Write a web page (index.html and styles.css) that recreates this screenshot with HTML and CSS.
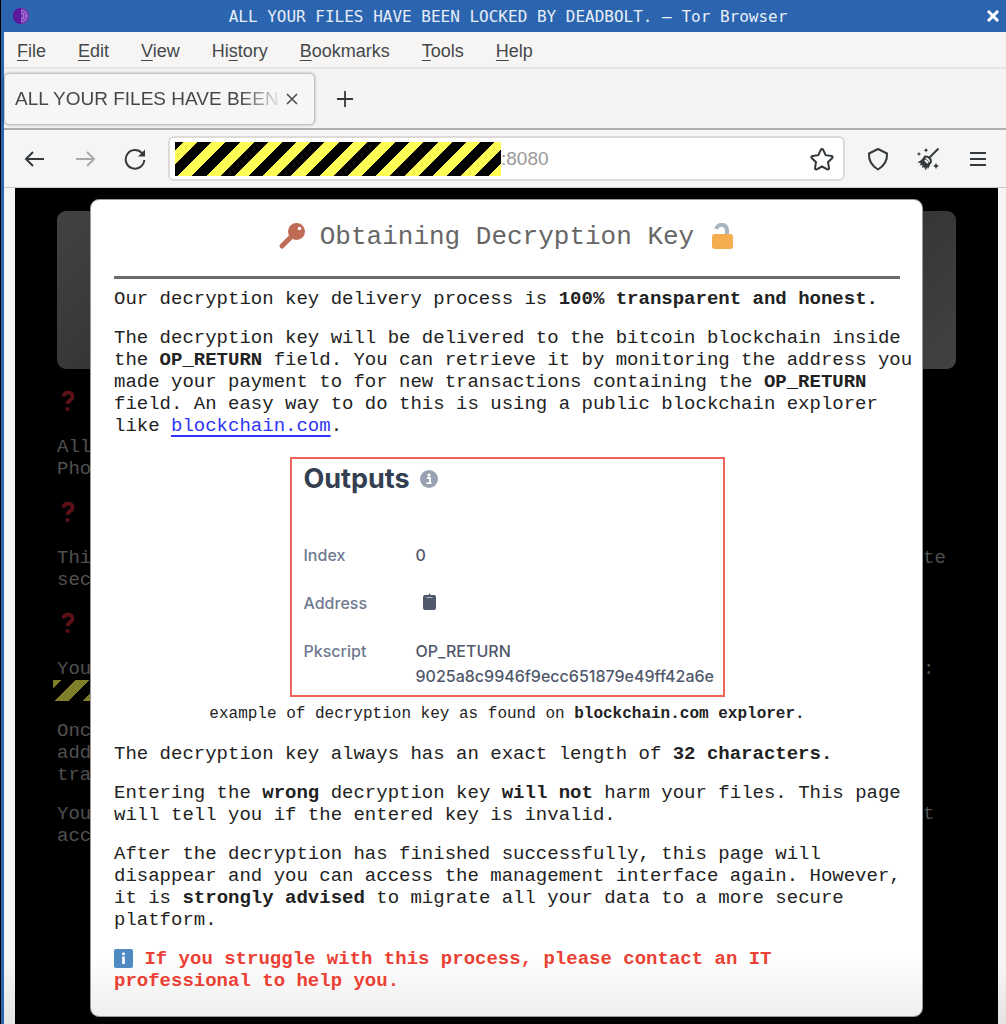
FILE: index.html
```html
<!DOCTYPE html>
<html lang="en">
<head>
    <meta charset="utf-8">
    <meta name="viewport" content="width=device-width, initial-scale=1">
    <title>ALL YOUR FILES HAVE BEEN LOCKED BY DEADBOLT.</title>
    <link rel="stylesheet" href="styles.css">
</head>
<body>
    <div class="window">
        <header class="titlebar">
            <svg class="app-icon" width="16" height="16" viewBox="0 0 16 16">
                <circle cx="8" cy="8" r="8" fill="#5b1fa0"/>
                <path d="M8 0a8 8 0 0 1 0 16z" fill="#7b3fb5"/>
                <path d="M8 2.500a5.500 5.500 0 0 1 0 11M8 5a3 3 0 0 1 0 6" fill="none" stroke="#b58cd8"/>
                <path d="M8 0a8 8 0 0 0 0 16z" fill="#5a189a"/>
            </svg>
            <span class="window-title">ALL YOUR FILES HAVE BEEN LOCKED BY DEADBOLT. — Tor Browser</span>
            <button class="window-close" aria-label="Close window">
                <svg width="12" height="12" viewBox="0 0 12 12"><path d="M2 2l8 8M10 2l-8 8" stroke="#fff" stroke-width="3" stroke-linecap="square"/></svg>
            </button>
        </header>

        <nav class="menubar">
            <button><u>F</u>ile</button>
            <button><u>E</u>dit</button>
            <button><u>V</u>iew</button>
            <button>Hi<u>s</u>tory</button>
            <button><u>B</u>ookmarks</button>
            <button><u>T</u>ools</button>
            <button><u>H</u>elp</button>
        </nav>

        <div class="tabstrip">
            <div class="tab">
                <span class="tab-title">ALL YOUR FILES HAVE BEEN LOCKED</span>
                <button aria-label="Close tab">
                    <svg width="12" height="12" viewBox="0 0 12 12"><path d="M1 1l10 10M11 1L1 11" stroke="#4a4e51" stroke-width="1.600"/></svg>
                </button>
            </div>
            <button class="new-tab" aria-label="New tab">
                <svg width="18" height="18" viewBox="0 0 18 18"><path d="M9 1v16M1 9h16" stroke="#33393c" stroke-width="1.800"/></svg>
            </button>
        </div>

        <div class="toolbar">
            <div class="tools">
                <button class="tool" aria-label="Back">
                    <svg width="22" height="22" viewBox="0 0 22 22"><path d="M20 11H2M9 4l-7 7 7 7"/></svg>
                </button>
                <button class="tool" aria-label="Forward" disabled>
                    <svg width="22" height="22" viewBox="0 0 22 22"><path d="M2 11h18M13 4l7 7-7 7"/></svg>
                </button>
                <button class="tool" aria-label="Reload">
                    <svg width="22" height="22" viewBox="0 0 22 22"><path d="M18 5.200A9.300 9.300 0 1 0 20.300 12"/><path d="M21 1.500v7h-7z" fill="#33393c" stroke="none"/></svg>
                </button>
            </div>
            <div class="urlbar">
                <span class="tape"></span>
                <input type="text" value=":8080" aria-label="Address">
                <button class="tool" aria-label="Bookmark this page">
                    <svg width="24" height="24" viewBox="0 0 24 24"><path d="M12 2c.500 0 .900.300 1.100.700l2.600 5.500 5.900.800c1 .200 1.400 1.300.700 2l-4.300 4.200 1 5.900c.200 1-.800 1.700-1.700 1.200L12 19.500l-5.300 2.800c-.900.500-1.900-.200-1.700-1.200l1-5.900L1.700 11c-.700-.700-.300-1.800.700-2l5.900-.800 2.600-5.500c.200-.400.600-.700 1.100-.700z"/></svg>
                </button>
            </div>
            <div class="tools">
                <button class="tool" aria-label="Security level">
                    <svg width="22" height="24" viewBox="0 0 22 24"><path d="M11 2l9 4.500c.500 7-2.500 12-9 16C4.500 18.500 1.500 13.500 2 6.500z" stroke-linejoin="round"/></svg>
                </button>
                <button class="tool" aria-label="New identity">
                    <svg width="24" height="24" viewBox="0 0 24 24">
                        <path d="M22.500 1.500l-9 9"/>
                        <path d="M8 10c3-1.500 7 1 7 5l-3 4"/>
                        <path d="M8 9.500l6 6.500c.500 2-1 4-2 6l-1-2-1 3.500-2-3.500-2 1 .500-3-3 .500 1.500-2L1 15c2 0 5-2 7-5.500z" fill="#33393c" stroke="none"/>
                        <path d="M10 1l.800 1.500 1.500.800-1.500.800L10 5.600l-.800-1.500-1.500-.800 1.500-.800zM3 5l.700 1.300L5 7l-1.300.700L3 9l-.700-1.300L1 7l1.300-.700zM20 16l1 2 2 1-2 1-1 2-1-2-2-1 2-1z" fill="#33393c" stroke="none"/>
                        <path d="M9 13l3 3" stroke="#f5f5f5"/>
                    </svg>
                </button>
                <button class="tool" aria-label="Open menu">
                    <svg width="18" height="18" viewBox="0 0 18 18"><path d="M1 3h16M1 9h16M1 15h16"/></svg>
                </button>
            </div>
        </div>

        <main class="page">
            <div class="backdrop">
                <div class="banner"></div>
                <svg class="question" width="22" height="22" viewBox="0 0 22 22"><path d="M6.500 6.500C7 1 16 1.500 15.500 7c-.500 3.500-4.500 3-5 7"/><circle cx="10.500" cy="19" r="2"/></svg>
                <div class="line"><p>All<br>Pho</p></div>
                <svg class="question" width="22" height="22" viewBox="0 0 22 22"><path d="M6.500 6.500C7 1 16 1.500 15.500 7c-.500 3.500-4.500 3-5 7"/><circle cx="10.500" cy="19" r="2"/></svg>
                <div class="line"><p>Thi<br>sec</p><p>te</p></div>
                <svg class="question" width="22" height="22" viewBox="0 0 22 22"><path d="M6.500 6.500C7 1 16 1.500 15.500 7c-.500 3.500-4.500 3-5 7"/><circle cx="10.500" cy="19" r="2"/></svg>
                <div class="line"><p>You</p><p>:</p></div>
                <div class="tape-dim"></div>
                <div class="line"><p>Onc<br>add<br>tra</p></div>
                <div class="line"><p>You<br>acc</p><p>t</p></div>
            </div>

            <section class="modal" role="dialog" aria-labelledby="modal-title">
                <h1 id="modal-title">
                    <svg width="28" height="28" viewBox="0 0 28 28">
                        <path d="M14 13L4 23" stroke="#be6d54" stroke-width="5" stroke-linecap="round"/>
                        <circle cx="18.500" cy="8.500" r="8.500" fill="#be6d54"/>
                        <circle cx="21.500" cy="5.500" r="1.800" fill="#fff"/>
                    </svg>
                    Obtaining Decryption Key
                    <svg width="28" height="28" viewBox="0 0 28 28">
                        <path d="M8 6c2-6 11-6 11 2v5" fill="none" stroke="#a9b6bf" stroke-width="4"/>
                        <rect x="4" y="11" width="21" height="15" rx="3" fill="#f5ae4d"/>
                    </svg>
                </h1>
                <hr>
                <p>Our decryption key delivery process is <b>100% transparent and honest.</b></p>
                <p>The decryption key will be delivered to the bitcoin blockchain inside the <b>OP_RETURN</b> field. You can retrieve it by monitoring the address you made your payment to for new transactions containing the <b>OP_RETURN</b> field. An easy way to do this is using a public blockchain explorer like <a href="#">blockchain.com</a>.</p>

                <figure>
                    <div class="outputs">
                        <h2>Outputs
                            <svg width="18" height="18" viewBox="0 0 18 18">
                                <circle cx="9" cy="9" r="9" fill="#98a1b2"/>
                                <circle cx="9" cy="5" r="1.600" fill="#fff"/>
                                <path d="M7 8h3v5M6.500 13.200h5" fill="none" stroke="#fff" stroke-width="1.800"/>
                            </svg>
                        </h2>
                        <dl>
                            <dt>Index</dt>
                            <dd>0</dd>
                            <dt>Address</dt>
                            <dd>
                                <svg class="clipboard" width="14" height="17" viewBox="0 0 14 17">
                                    <rect x="0" y="2" width="13" height="15" rx="2" fill="#50586b"/>
                                    <path d="M3.500 4.500V2h2l1-2 1 2h2v2.500z" fill="#50586b"/>
                                    <path d="M3.500 4.500h6" stroke="#b5bac5"/>
                                </svg>
                            </dd>
                            <dt>Pkscript</dt>
                            <dd>OP_RETURN<br>9025a8c9946f9ecc651879e49ff42a6e</dd>
                        </dl>
                    </div>
                    <figcaption>example of decryption key as found on <b>blockchain.com explorer.</b></figcaption>
                </figure>

                <p>The decryption key always has an exact length of <b>32 characters.</b></p>
                <p>Entering the <b>wrong</b> decryption key <b>will not</b> harm your files. This page will tell you if the entered key is invalid.</p>
                <p>After the decryption has finished successfully, this page will disappear and you can access the management interface again. However, it is <b>strongly advised</b> to migrate all your data to a more secure platform.</p>
                <p class="warning">
                    <svg width="19" height="19" viewBox="0 0 19 19">
                        <rect width="19" height="19" rx="2" fill="#4f8ac3"/>
                        <circle cx="9.500" cy="4.800" r="1.500" fill="#fff"/>
                        <path d="M9.500 7.500V15" stroke="#fff" stroke-width="2.600"/>
                    </svg>
                    If you struggle with this process, please contact an IT professional to help you.
                </p>
            </section>
        </main>
    </div>
</body>
</html>
```

FILE: styles.css
```css
* {
    box-sizing: border-box;
}

body {
    margin: 0;
    background: #000;
    font-family: "Liberation Sans", Arial, sans-serif;
    color: #44484a;
}

button {
    padding: 0;
    border: none;
    background: none;
    font: inherit;
    color: inherit;
    cursor: pointer;
}

svg {
    display: block;
}

.window {
    display: flex;
    flex-direction: column;
    min-height: 100vh;
    margin-left: 1px;
    border-left: 3px solid #2b65b0;
    background: linear-gradient(to top, #e4e4e4, #f5f5f5 60px);
}

/* window chrome */
.titlebar {
    display: flex;
    align-items: center;
    height: 32px;
    padding: 0 7px 0 9px;
    background: #2b65b0;
    color: #e8eef7;
}

.window-title {
    flex: 1;
    text-align: center;
    font-family: "DejaVu Sans Mono", monospace;
    font-size: 16px;
    white-space: nowrap;
    overflow: hidden;
}

.menubar {
    display: flex;
    align-items: center;
    gap: 32px;
    height: 37px;
    padding: 4px 13px 0;
    border-bottom: 2px solid #e6e5e3;
    background: #f6f5f4;
    font-size: 18px;
}

.menubar u {
    text-underline-offset: 3px;
}

.tabstrip {
    display: flex;
    align-items: center;
    gap: 21px;
    height: 61px;
    padding-top: 1px;
    border-bottom: 2px solid #aeaeb0;
    background: #f5f4f3;
}

.tab {
    display: flex;
    align-items: center;
    gap: 3px;
    width: 311px;
    height: 52px;
    padding: 0 16px 0 10px;
    border: 1px solid #c3c3cb;
    border-radius: 5px;
    background: #f6f6f6;
    box-shadow: 0 0 3px rgba(0, 0, 0, 0.3);
}

.tab-title {
    flex: 1;
    font-size: 19px;
    white-space: nowrap;
    overflow: hidden;
    -webkit-mask-image: linear-gradient(to right, #000 84%, transparent);
    mask-image: linear-gradient(to right, #000 84%, transparent);
}

.toolbar {
    display: flex;
    align-items: center;
    gap: 18px;
    height: 58px;
    padding: 0 13px 0 16px;
    border-bottom: 1px solid #cfcac6;
    background: #f5f5f5;
}

.tools {
    display: flex;
    gap: 20px;
}

.tool {
    display: flex;
    align-items: center;
    justify-content: center;
    width: 30px;
    height: 30px;
}

.tool svg {
    fill: none;
    stroke: #33393c;
    stroke-width: 2;
}

.tool:disabled {
    opacity: 0.4;
}

.urlbar {
    display: flex;
    align-items: center;
    flex: 1;
    min-width: 0;
    height: 45px;
    padding: 0 6px 0 5px;
    border: 2px solid #dedad7;
    border-radius: 6px;
    background: #fff;
}

.urlbar input {
    flex: 1;
    min-width: 0;
    padding: 0;
    border: none;
    outline: none;
    background: none;
    font: 19px "Liberation Sans", Arial, sans-serif;
    color: #999;
}

.tape {
    flex: 0 1 326px;
    height: 34px;
    background: repeating-linear-gradient(135deg, #000 0 6px, #fffe54 6px 16px, #000 16px 20px);
}

/* page inside the browser */
.page {
    display: grid;
    flex: 1;
    align-items: start;
    margin: 0 8px 0 11px;
    background: #000;
    font-family: "Liberation Mono", "Courier New", monospace;
    font-size: 19px;
    line-height: 22px;
}

.backdrop,
.modal {
    grid-area: 1 / 1;
}

.backdrop {
    padding: 23px 42px 0;
    color: #505050;
}

.banner {
    height: 158px;
    border-radius: 9px;
    background: linear-gradient(135deg, #424242, #202020 50%, #424242);
}

.question {
    margin: 21px 0 24px;
    fill: #5c1119;
}

.question path {
    fill: none;
    stroke: #5c1119;
    stroke-width: 4;
}

.line {
    display: grid;
    grid-template-columns: 1fr 33px;
    margin-bottom: 17px;
}

.line p {
    margin: 0;
}

.line:has(+ .tape-dim) {
    margin-bottom: 0;
}

.tape-dim {
    width: 50%;
    height: 21px;
    margin: 0 0 19px -4px;
    background: repeating-linear-gradient(135deg, #7f7f2a 0 6px, #000 6px 16px, #7f7f2a 16px 20px);
}

.modal {
    margin: 11px 75px 7px;
    padding: 22px 22px 22px 23px;
    border: 1px solid #999;
    border-radius: 9px;
    background: linear-gradient(to top, #eee, #fff 60px);
    color: #222;
}

.modal h1 {
    display: flex;
    align-items: center;
    justify-content: center;
    gap: 14px;
    margin: 0 0 24px;
    font-size: 26px;
    font-weight: normal;
    line-height: 30px;
    color: #666;
}

.modal hr {
    height: 3px;
    margin: 0 0 9px;
    border: none;
    background: #6b6b6b;
}

/* text runs slightly past the rule on the right */
.modal p {
    margin: 0 -14px 17px 0;
}

.modal a {
    color: #2f35f5;
    text-decoration-thickness: 2px;
    text-underline-offset: 4px;
}

.modal figure {
    margin: 20px 0 18px;
    text-align: center;
}

.modal figcaption {
    margin-top: 6px;
    font-size: 16px;
}

.outputs {
    width: 435px;
    max-width: 100%;
    margin: 0 auto;
    padding: 4px 12px 6px;
    border: 2px solid #ef6358;
    font-family: Inter, sans-serif;
    font-size: 16px;
    font-weight: 500;
    line-height: 25px;
    text-align: left;
    color: #50586b;
}

.outputs h2 {
    display: flex;
    align-items: center;
    gap: 10px;
    margin: 0 0 48px;
    font-size: 27px;
    font-weight: 700;
    line-height: 32px;
    color: #353f52;
}

.outputs dl {
    display: grid;
    grid-template-columns: 112px 1fr;
    row-gap: 23px;
    margin: 0;
}

.outputs dt {
    color: #6f7a8f;
}

.outputs dd {
    margin: 0;
}

.clipboard {
    margin: 2px 7px;
}

.modal .warning {
    margin-bottom: 2px;
    font-weight: bold;
    color: #eb4034;
}

.warning svg {
    display: inline-block;
    vertical-align: -4px;
}
```
